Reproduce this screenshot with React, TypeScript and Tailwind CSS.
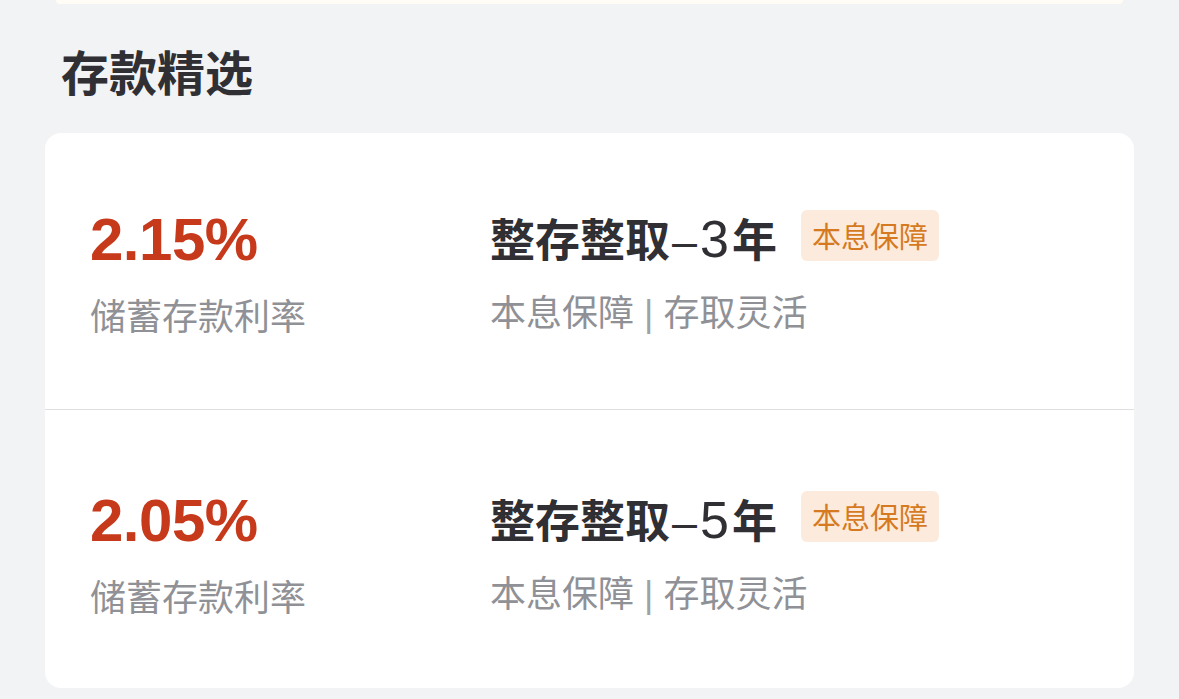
const font = "font-['Noto_Sans_CJK_SC','Noto_Sans',sans-serif]";

type Deposit = {
  rate: string;
  name: string;
  term: string;
};

const deposits: Deposit[] = [
  { rate: "2.15%", name: "整存整取", term: "3年" },
  { rate: "2.05%", name: "整存整取", term: "5年" },
];

const DepositRow = ({ d, last }: { d: Deposit; last: boolean }) => {
  return (
    <div
      className={`flex items-center ${
        last ? "h-[278px] pt-[6px]" : "h-[277px] border-b border-[#dfdfe1]"
      }`}
    >
      <div className="flex w-[445px] flex-col pl-[45px]">
        <span className="font-['Liberation_Sans',sans-serif] text-[60px] font-bold leading-none tracking-[-0.5px] text-[#c7391b]">
          {d.rate}
        </span>
        <span className="mt-[26px] text-[36px] leading-none text-[#909196]">
          储蓄存款利率
        </span>
      </div>
      <div className="flex flex-col">
        <div className="flex items-center gap-[24px]">
          <span className="h-[45px] text-[45px] font-semibold leading-none text-[#2f2f34]">
            {d.name}
            <span className="ml-[2px] mr-[3px] font-['Liberation_Sans',sans-serif] font-normal">
              –
            </span>
            <span className="font-['Liberation_Sans',sans-serif] text-[52px] font-normal leading-none">
              {d.term.slice(0, 1)}
            </span>
            <span className="ml-[3px]">{d.term.slice(1)}</span>
          </span>
          <span className="rounded-[6px] bg-[#fcebdc] px-[11px] py-[11px] text-[29px] leading-none text-[#d67a22]">
            本息保障
          </span>
        </div>
        <span className="mt-[31px] text-[36px] leading-none text-[#909196]">
          本息保障
          <span className="font-['Liberation_Sans',sans-serif] text-[#a0a1a6]">
            {" | "}
          </span>
          存取灵活
        </span>
      </div>
    </div>
  );
};

export default function App() {
  return (
    <div className={`h-[699px] w-[1179px] overflow-hidden bg-[#f2f3f5] ${font}`}>
      <div className="mx-[56px] h-[4px] rounded-b-[10px] bg-[#fffcf5]" />
      <div className="h-[129px] pl-[61px] pt-[42px]">
        <h2 className="text-[48px] font-semibold leading-none text-[#2f2f34]">
          存款精选
        </h2>
      </div>
      <div className="ml-[45px] w-[1089px] overflow-hidden rounded-[16px] bg-white">
        {deposits.map((d, idx) => (
          <DepositRow d={d} last={idx === deposits.length - 1} key={idx} />
        ))}
      </div>
    </div>
  );
}
